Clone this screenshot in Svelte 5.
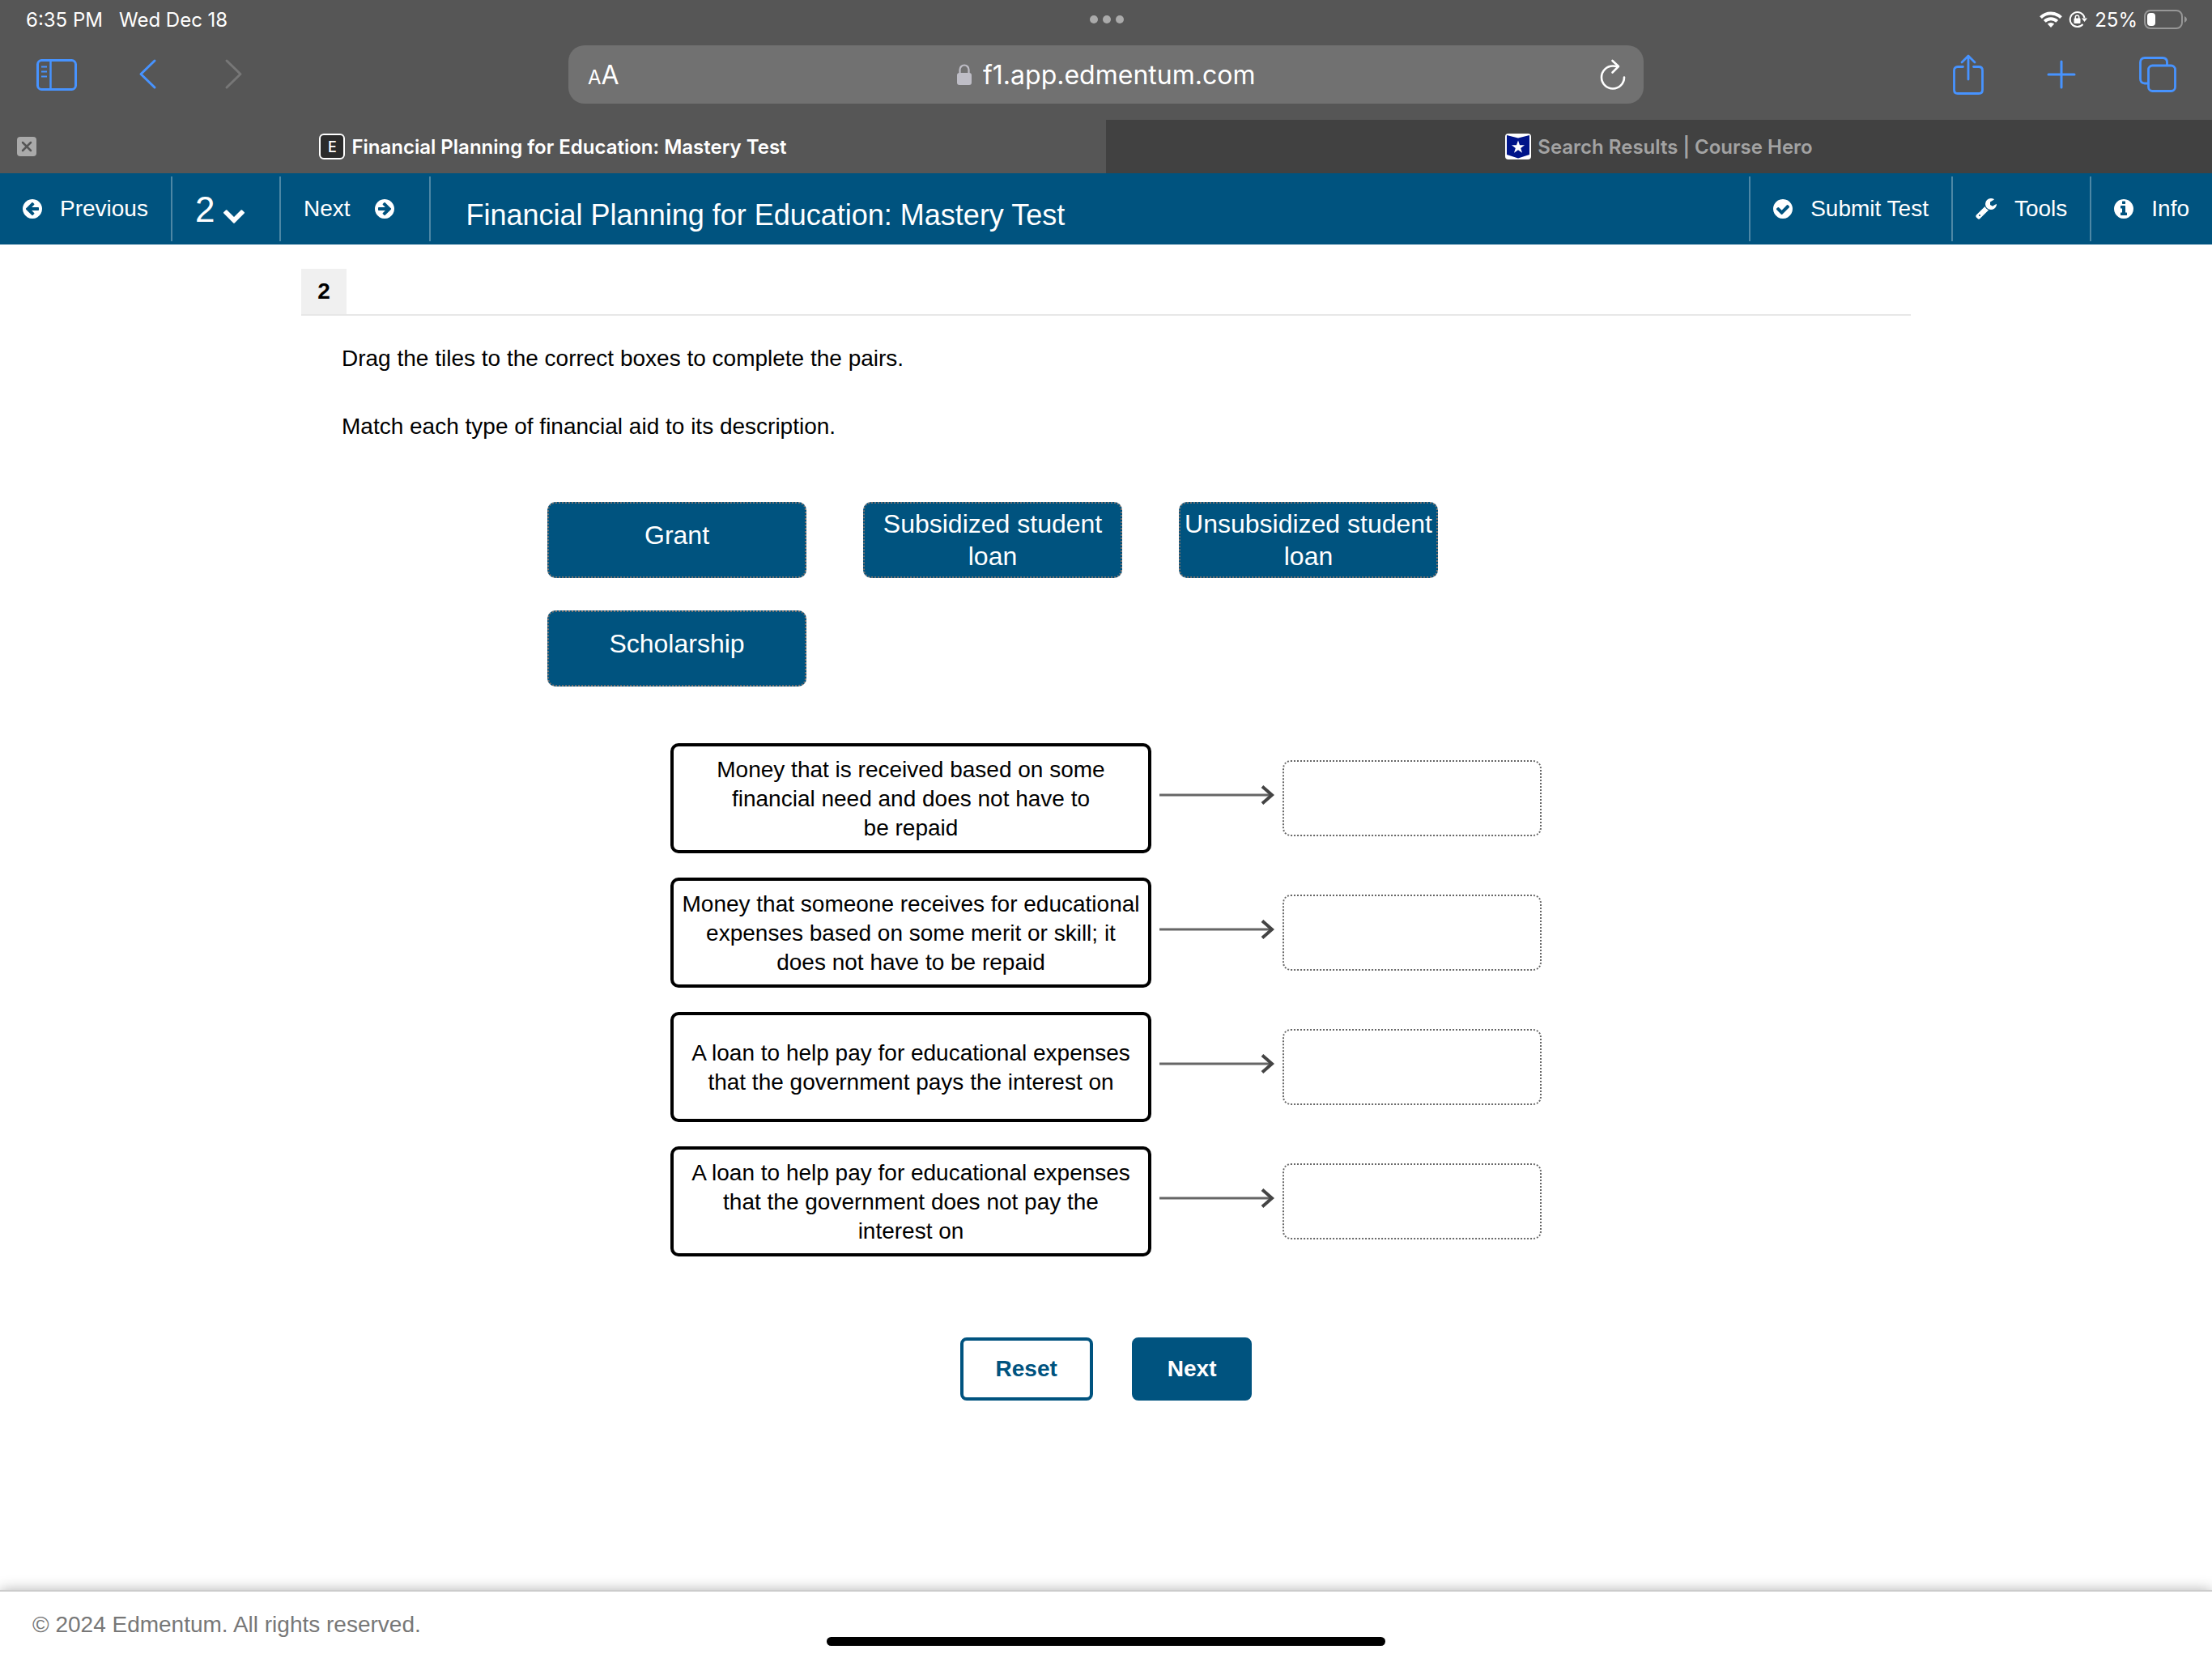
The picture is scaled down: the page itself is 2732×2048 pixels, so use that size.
<script>
	const disc = "m0 0q0 209-103 385.5t-279.5 279.5-385.5 103-385.5-103-279.5-279.5-103-385.5 103-385.5 279.5-279.5 385.5-103 385.5 103 279.5 279.5 103 385.5z";
	const icons = {
		left: "M1408 960v-128q0-26-19-45t-45-19h-502l189-189q19-19 19-45t-19-45l-91-91q-18-18-45-18t-45 18l-362 362-91 91q-18 18-18 45t18 45l91 91 362 362q18 18 45 18t45-18l91-91q18-18 18-45t-18-45l-189-189h502q26 0 45-19t19-45zm256-64" + disc,
		right: "M1413 896q0-27-18-45l-91-91-362-362q-18-18-45-18t-45 18l-91 91q-18 18-18 45t18 45l189 189h-502q-26 0-45 19t-19 45v128q0 26 19 45t45 19h502l-189 189q-19 19-19 45t19 45l91 91q18 18 45 18t45-18l362-362 91-91q18-18 18-45zm251 0" + disc,
		check: "M1412 734q0-28-18-46l-91-90q-19-19-45-19t-45 19l-408 407-226-226q-19-19-45-19t-45 19l-91 90q-18 18-18 46 0 27 18 45l362 362q19 19 45 19 27 0 46-19l543-543q18-18 18-45zm252 162" + disc,
		info: "M1152 1376v-160q0-14-9-23t-23-9h-96v-512q0-14-9-23t-23-9h-320q-14 0-23 9t-9 23v160q0 14 9 23t23 9h96v320h-96q-14 0-23 9t-9 23v160q0 14 9 23t23 9h448q14 0 23-9t9-23zm-128-896v-160q0-14-9-23t-23-9h-192q-14 0-23 9t-9 23v160q0 14 9 23t23 9h192q14 0 23-9t9-23zm640 416" + disc,
		wrench: "M448 1472q0-26-19-45t-45-19-45 19-19 45 19 45 45 19 45-19 19-45zm644-420l-682 682q-37 37-90 37-52 0-91-37l-106-108q-38-36-38-90 0-53 38-91l681-681q39 98 114.5 173.5t173.5 114.5zm634-435q0 39-23 106-47 134-164.5 217.5t-258.5 83.5q-185 0-316.5-131.5t-131.5-316.5 131.5-316.5 316.5-131.5q58 0 121.5 16.5t107.5 46.5q16 11 16 28t-16 28l-293 169v224l193 107q5-3 79-48.5t135.5-81 70.5-35.5q15 0 23.5 10t8.5 25z",
	};

	const tiles = ["Grant", "Subsidized student loan", "Unsubsidized student loan", "Scholarship"];
	const descriptions = [
		"Money that is received based on some financial need and does not have to\nbe repaid",
		"Money that someone receives for educational expenses based on some merit or skill; it does not have to be repaid",
		"A loan to help pay for educational expenses that the government pays the interest on",
		"A loan to help pay for educational expenses that the government does not pay the\ninterest on",
	];

	let url = "f1.app.edmentum.com";
	let question = "2";
	let dragged = null;
	let answers = descriptions.map(() => null);

	const drop = (index) => {
		if (dragged === null) return;
		answers = answers.map((a, i) => (i === index ? dragged : a === dragged ? null : a));
		dragged = null;
	};

	const reset = () => {
		answers = descriptions.map(() => null);
	};
</script>

<div class="screen">
	<header class="browser">
		<div class="status">
			<div class="clock">
				<span>6:35 PM</span>
				<span>Wed Dec 18</span>
			</div>
			<svg width="42" height="10" viewBox="0 0 42 10" fill="#aaaaaa">
				<circle cx="5" cy="5" r="5" />
				<circle cx="21" cy="5" r="5" />
				<circle cx="37" cy="5" r="5" />
			</svg>
			<div class="indicators">
				<svg width="28" height="20" viewBox="0 0 28 20" fill="none" stroke="#fff" stroke-width="4">
					<path d="M1.5 7.6a18 18 0 0 1 25 0" />
					<path d="M6.3 12.4a11 11 0 0 1 15.4 0" />
					<path d="M14 20l-4.2-4.4a6 6 0 0 1 8.4 0z" fill="#fff" stroke="none" />
				</svg>
				<svg width="24" height="22" viewBox="0 0 24 22" fill="none" stroke="#fff" stroke-width="2">
					<path d="M19.5 9A9 9 0 1 0 17.5 17" />
					<path d="M16 9.5h7l-3.5 4.5z" fill="#fff" stroke="none" />
					<rect x="6.5" y="9.5" width="8" height="6.5" rx="1" fill="#fff" stroke="none" />
					<path d="M8.3 10V8.2a2.2 2.2 0 0 1 4.4 0V10" stroke-width="1.5" />
				</svg>
				<span>25%</span>
				<svg width="54" height="24" viewBox="0 0 54 24">
					<rect x="1" y="1" width="46" height="22" rx="7" fill="none" stroke="#979797" stroke-width="2" />
					<rect x="4" y="4" width="10" height="16" rx="4" fill="#fff" />
					<path d="M50 8q3 1.5 3 4t-3 4z" fill="#979797" />
				</svg>
			</div>
		</div>

		<div class="toolbar">
			<div class="tools start">
				<button aria-label="Sidebar">
					<svg width="50" height="40" viewBox="0 0 50 40" fill="none" stroke="#4793ff" stroke-width="3">
						<rect x="1.5" y="2.5" width="47" height="36" rx="5" />
						<path d="M17.5 3v35" stroke-width="2.5" />
						<path d="M6 10.5h7M6 16.5h7M6 22.5h7" stroke-width="2" />
					</svg>
				</button>
				<button aria-label="Back">
					<svg width="30" height="40" viewBox="0 0 30 40" fill="none" stroke="#4793ff" stroke-width="3" stroke-linecap="round" stroke-linejoin="round">
						<path d="M22 3L5 19.5 22 36" />
					</svg>
				</button>
				<button aria-label="Forward">
					<svg width="30" height="40" viewBox="0 0 30 40" fill="none" stroke="#777777" stroke-width="3" stroke-linecap="round" stroke-linejoin="round">
						<path d="M7 3l17 16.5L7 36" />
					</svg>
				</button>
			</div>
			<div class="address">
				<button class="text-size" aria-label="Text size"><small>A</small>A</button>
				<label class="url">
					<svg width="18" height="26" viewBox="0 0 18 26">
						<rect y="11" width="18" height="15" rx="3" fill="#bebdc6" />
						<path d="M3.5 12V7a5.5 5.5 0 0 1 11 0v5" fill="none" stroke="#bebdc6" stroke-width="2.2" />
					</svg>
					<input type="text" aria-label="Address" bind:value={url} />
				</label>
				<button class="reload" aria-label="Reload">
					<svg width="32" height="38" viewBox="0 0 32 38" fill="none" stroke="#fff" stroke-width="2.6" stroke-linecap="round" stroke-linejoin="round">
						<path d="M30 22.5A14 14 0 1 1 16 8.5q3 0 6 .5" />
						<path d="M15.5 2l7.5 7-7.5 7.5" />
					</svg>
				</button>
			</div>
			<div class="tools end">
				<button aria-label="Share">
					<svg width="38" height="50" viewBox="0 0 38 50" fill="none" stroke="#4793ff" stroke-width="2.8" stroke-linecap="round" stroke-linejoin="round">
						<path d="M12.5 15.5H6q-4.5 0-4.5 4.5v24q0 4.5 4.5 4.5h26q4.5 0 4.5-4.5V20q0-4.5-4.5-4.5h-6.5" />
						<path d="M19 31V2.5M11 10l8-8 8 8" />
					</svg>
				</button>
				<button aria-label="New tab">
					<svg width="36" height="36" viewBox="0 0 36 36" fill="none" stroke="#4793ff" stroke-width="3" stroke-linecap="round">
						<path d="M18 2v32M2 18h32" />
					</svg>
				</button>
				<button aria-label="Tabs">
					<svg width="46" height="44" viewBox="0 0 46 44" fill="none" stroke="#4793ff" stroke-width="2.8">
						<path d="M11 33H7q-5.5 0-5.5-5.5V7q0-5.5 5.5-5.5h22q5.5 0 5.5 5.5v3.5" />
						<rect x="11.5" y="11" width="33" height="31.5" rx="5" />
					</svg>
				</button>
			</div>
		</div>

		<div class="tabs">
			<div class="tab active">
				<button class="close" aria-label="Close tab">
					<svg width="24" height="24" viewBox="0 0 24 24">
						<rect width="24" height="24" rx="4" fill="#aaaaaa" />
						<path d="M7 7l10 10M17 7L7 17" stroke="#565656" stroke-width="2.5" stroke-linecap="round" />
					</svg>
				</button>
				<span class="favicon">E</span>
				<span>Financial Planning for Education: Mastery Test</span>
			</div>
			<div class="tab">
				<svg width="32" height="32" viewBox="0 0 32 32">
					<rect width="32" height="32" rx="4" fill="#fff" />
					<path d="M2 2l14 3.5L30 2v24l-14 4.5L2 26z" fill="#001489" />
					<path d="M16 8.5l2 5.7 6 .1-4.8 3.7 1.8 5.8-5-3.5-5 3.5 1.8-5.8L8 14.3l6-.1z" fill="#fff" />
				</svg>
				<span>Search Results | Course Hero</span>
			</div>
		</div>
	</header>

	<nav>
		<button class="item">
			<svg width="24" height="24" viewBox="128 128 1536 1536"><path d={icons.left} /></svg>
			Previous
		</button>
		<label class="item picker">
			<select aria-label="Question" bind:value={question}>
				<option>2</option>
			</select>
			<svg width="26" height="17" viewBox="90 533 1612 1035"><path d="M1683 808l-742 741q-19 19-45 19t-45-19l-742-741q-19-19-19-45.5t19-45.5l166-165q19-19 45-19t45 19l531 531 531-531q19-19 45-19t45 19l166 165q19 19 19 45.5t-19 45.5z" /></svg>
		</label>
		<button class="item next">
			Next
			<svg width="24" height="24" viewBox="128 128 1536 1536"><path d={icons.right} /></svg>
		</button>
		<h1>Financial Planning for Education: Mastery Test</h1>
		<button class="item">
			<svg width="24" height="24" viewBox="128 128 1536 1536"><path d={icons.check} /></svg>
			Submit Test
		</button>
		<button class="item">
			<svg width="26" height="26" viewBox="64 128 1664 1664"><path d={icons.wrench} /></svg>
			Tools
		</button>
		<button class="item">
			<svg width="24" height="24" viewBox="128 128 1536 1536"><path d={icons.info} /></svg>
			Info
		</button>
	</nav>

	<main>
		<div class="number"><span>2</span></div>
		<div class="prompt">
			<p>Drag the tiles to the correct boxes to complete the pairs.</p>
			<p>Match each type of financial aid to its description.</p>
		</div>

		<div class="tiles">
			{#each tiles as tile (tile)}
				<button class="tile" class:used={answers.includes(tile)} draggable="true" on:dragstart={() => (dragged = tile)}>
					<span>{tile}</span>
				</button>
			{/each}
		</div>

		<div class="pairs">
			{#each descriptions as description, i}
				<div class="pair">
					<div class="description">{description}</div>
					<svg class="arrow" width="142" height="24" viewBox="0 0 142 24" fill="none">
						<path d="M0 12h138" stroke="#666666" stroke-width="3" />
						<path d="M127 1.5L139 12l-12 10.5" stroke="#444444" stroke-width="4" />
					</svg>
					<div class="target" role="group" on:dragover|preventDefault on:drop|preventDefault={() => drop(i)}>
						{#if answers[i]}
							<div class="tile"><span>{answers[i]}</span></div>
						{/if}
					</div>
				</div>
			{/each}
		</div>

		<div class="actions">
			<button class="reset" on:click={reset}>Reset</button>
			<button class="submit">Next</button>
		</div>
	</main>

	<footer>© 2024 Edmentum. All rights reserved.</footer>
	<div class="home"></div>
</div>

<style>
	:global(body) {
		margin: 0;
		background: #fff;
	}

	* {
		box-sizing: border-box;
	}

	button,
	input,
	select {
		padding: 0;
		border: none;
		border-radius: 0;
		background: none;
		color: inherit;
		font: inherit;
	}

	button {
		cursor: pointer;
	}

	svg {
		display: block;
		flex: none;
	}

	.screen {
		display: flex;
		flex-direction: column;
		min-height: 100vh;
		color: #000;
		font-family: "Liberation Sans", Arial, sans-serif;
		font-size: 28px;
	}

	.browser {
		background: #565656;
		color: #fff;
		font-family: Inter, "Noto Sans", sans-serif;
		font-size: 24px;
	}

	.status {
		display: grid;
		grid-template-columns: 1fr auto 1fr;
		align-items: center;
		height: 48px;
		padding: 0 30px 0 32px;
	}

	.clock {
		display: flex;
		gap: 20px;
	}

	.indicators {
		display: flex;
		justify-content: flex-end;
		align-items: center;
		gap: 8px;
	}

	.toolbar {
		display: grid;
		grid-template-columns: 1fr minmax(0, 1328px) 1fr;
		align-items: center;
		height: 100px;
		padding-bottom: 12px;
	}

	.tools {
		display: flex;
		align-items: center;
		gap: 74px;
		padding-left: 45px;
	}

	.tools.end {
		justify-content: flex-end;
		gap: 78px;
		padding: 0 44px 0 0;
	}

	.address {
		display: grid;
		grid-template-columns: 1fr auto 1fr;
		align-items: center;
		height: 72px;
		padding: 0 22px 0 24px;
		border-radius: 20px;
		background: #717171;
		font-size: 32px;
	}

	.text-size {
		justify-self: start;
	}

	.text-size small {
		font-size: 24px;
	}

	.url {
		display: flex;
		align-items: center;
		gap: 14px;
	}

	.url input {
		width: 338px;
		outline: none;
	}

	.reload {
		justify-self: end;
	}

	.tabs {
		display: flex;
		height: 66px;
	}

	.tab {
		flex: 1;
		display: flex;
		justify-content: center;
		align-items: center;
		gap: 8px;
		position: relative;
		background: #414141;
		color: #a3a3a3;
		font-weight: 600;
	}

	.tab.active {
		background: #565656;
		color: #fff;
	}

	.close {
		position: absolute;
		left: 21px;
	}

	.favicon {
		display: flex;
		justify-content: center;
		align-items: center;
		width: 32px;
		height: 32px;
		border: 2px solid #fff;
		border-radius: 6px;
		background: #2b2b2b;
		font-size: 18px;
		font-weight: 500;
	}

	nav {
		display: flex;
		height: 88px;
		padding: 4px 0;
		background: #00537f;
		color: #fff;
	}

	nav svg {
		fill: #fff;
	}

	.item {
		display: flex;
		align-items: center;
		gap: 22px;
		padding: 0 28px;
		border-right: 2px solid #4d87a5;
	}

	.picker {
		gap: 10px;
		padding-right: 43px;
	}

	.picker select {
		appearance: none;
		outline: none;
		font-size: 44px;
	}

	.picker svg {
		margin-top: 18px;
	}

	.next {
		gap: 30px;
		padding-right: 43px;
	}

	h1 {
		flex: 1;
		margin: 0;
		padding: 14px 0 0 44px;
		font-size: 36px;
		font-weight: 400;
		line-height: 68px;
	}

	h1 ~ .item {
		border-right: none;
		border-left: 2px solid #4d87a5;
	}

	main {
		flex: 1;
		width: 100%;
		max-width: 1988px;
		margin: 0 auto;
		padding: 30px 0;
	}

	.number {
		display: flex;
		border-bottom: 2px solid #e7e7e7;
		font-weight: 700;
	}

	.number span {
		width: 56px;
		background: #f0f0f0;
		line-height: 56px;
		text-align: center;
	}

	.prompt {
		padding: 32px 50px 0;
		line-height: 42px;
	}

	.prompt p {
		margin: 0 0 42px;
	}

	.prompt p:last-child {
		margin-bottom: 0;
	}

	.tiles {
		display: flex;
		flex-wrap: wrap;
		gap: 40px 70px;
		max-width: 1380px;
		margin: 72px auto 70px;
	}

	.tile {
		display: flex;
		justify-content: center;
		align-items: center;
		width: 320px;
		height: 94px;
		border: 2px dotted #7d7470;
		border-radius: 10px;
		background: #00537f;
		color: #fff;
		font-size: 32px;
		line-height: 40px;
		text-align: center;
	}

	.tile.used {
		visibility: hidden;
	}

	.tile span {
		min-height: 52px;
	}

	.pairs {
		display: flex;
		flex-direction: column;
		align-items: center;
		gap: 30px;
	}

	.pair {
		display: flex;
		align-items: center;
		gap: 10px;
	}

	.description {
		display: flex;
		justify-content: center;
		align-items: center;
		width: 594px;
		height: 136px;
		padding: 2px 8px 0;
		border: 4px solid #000;
		border-radius: 10px;
		line-height: 36px;
		text-align: center;
		white-space: pre-line;
	}

	.arrow {
		margin-bottom: 8px;
	}

	.target {
		width: 320px;
		height: 94px;
		border: 2px dotted #666666;
		border-radius: 10px;
	}

	.target .tile {
		margin: -2px;
	}

	.actions {
		display: flex;
		justify-content: center;
		gap: 48px;
		margin-top: 100px;
	}

	.actions button {
		height: 78px;
		padding: 0 40px;
		border: 4px solid #00537f;
		border-radius: 8px;
		color: #00537f;
		font-weight: 700;
	}

	.actions .submit {
		background: #00537f;
		color: #fff;
	}

	footer {
		height: 84px;
		padding: 0 40px;
		border-top: 2px solid #cccccc;
		box-shadow: 0 0 16px rgba(0, 0, 0, 0.3);
		color: #777777;
		line-height: 82px;
	}

	.home {
		position: fixed;
		bottom: 15px;
		left: 50%;
		width: 690px;
		height: 11px;
		margin-left: -345px;
		border-radius: 6px;
		background: #000;
	}
</style>
